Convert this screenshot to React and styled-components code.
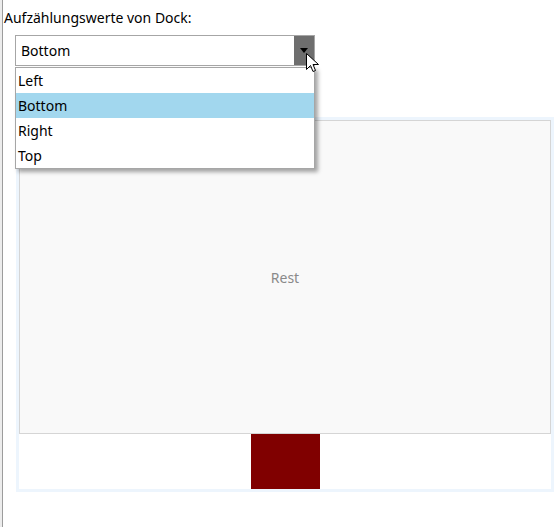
import React from "react";
import styled, { createGlobalStyle } from "styled-components";

const GlobalStyle = createGlobalStyle`
  html, body {
    margin: 0;
    padding: 0;
    background: #ffffff;
  }
  body {
    font-family: "Noto Sans", "Open Sans", sans-serif;
    font-size: 14px;
    color: #000000;
  }
`;

const OPTIONS = ["Left", "Bottom", "Right", "Top"];

const Styles = {
  Window: styled.div`
    display: flex;
    width: 560px;
    height: 527px;
    overflow: hidden;
  `,
  Edge: styled.div`
    flex: 0 0 2px;
    background: #ececec;
    border-right: 1px solid #9c9c9c;
  `,
  Main: styled.div`
    flex: 1;
    display: flex;
    flex-direction: column;
    position: relative;
  `,
  Label: styled.div`
    height: 35px;
    box-sizing: border-box;
    padding: 8px 0 0 1px;
    line-height: 19px;
    white-space: nowrap;
  `,
  Combo: styled.div`
    position: relative;
    margin-left: 12px;
    width: 300px;
    height: 31px;
    box-sizing: border-box;
    border: 1px solid #a6a6a6;
    display: flex;
    align-items: stretch;
    background: #ffffff;
  `,
  ComboText: styled.div`
    flex: 1;
    display: flex;
    align-items: center;
    padding-left: 5px;
  `,
  ComboButton: styled.div`
    flex: 0 0 20px;
    background: #6e6e6e;
    display: flex;
    align-items: center;
    justify-content: center;
  `,
  Popup: styled.ul`
    position: absolute;
    top: 31px;
    left: -1px;
    width: 300px;
    box-sizing: border-box;
    margin: 0;
    padding: 0;
    list-style: none;
    background: #ffffff;
    border: 1px solid #a6a6a6;
    box-shadow: 3px 3px 4px rgba(0, 0, 0, 0.35);
    z-index: 2;
  `,
  Item: styled.li`
    height: 25px;
    line-height: 25px;
    padding-left: 2px;
    background: ${(props) => (props.selected ? "#a2d7ee" : "transparent")};
  `,
  Cursor: styled.svg`
    position: absolute;
    left: 290px;
    top: 17px;
    z-index: 3;
  `,
  Frame: styled.div`
    margin: 51px 0 0 13px;
    width: 538px;
    height: 375px;
    box-sizing: border-box;
    border: 3px solid #edf5fd;
    display: flex;
    flex-direction: column;
  `,
  Rest: styled.div`
    flex: 1;
    background: #f9f9f9;
    border: 1px solid #d5d5d5;
    display: flex;
    align-items: center;
    justify-content: center;
    color: #8a8a8a;
  `,
  Dock: styled.div`
    height: 55px;
    display: flex;
    justify-content: center;
  `,
  Block: styled.div`
    width: 69px;
    background: #800000;
  `,
};

export default function App() {
  return (
    <>
      <GlobalStyle />
      <Styles.Window>
        <Styles.Edge />
        <Styles.Main>
          <Styles.Label>Aufzählungswerte von Dock:</Styles.Label>
          <Styles.Combo>
            <Styles.ComboText>Bottom</Styles.ComboText>
            <Styles.ComboButton>
              <svg width="8" height="5" viewBox="0 0 8 5">
                <path d="M0 0 H8 L4 5 Z" fill="#000" />
              </svg>
            </Styles.ComboButton>
            <Styles.Popup>
              {OPTIONS.map((opt) => (
                <Styles.Item key={opt} selected={opt === "Bottom"}>
                  {opt}
                </Styles.Item>
              ))}
            </Styles.Popup>
            <Styles.Cursor width="13" height="21" viewBox="0 0 13 21">
              <path
                d="M0.5 0.5 V16.5 L4.5 12.5 L7 18.5 L9.5 17.5 L7 11.5 H12.5 Z"
                fill="#fff"
                stroke="#000"
                strokeWidth="1"
              />
            </Styles.Cursor>
          </Styles.Combo>
          <Styles.Frame>
            <Styles.Rest>Rest</Styles.Rest>
            <Styles.Dock>
              <Styles.Block />
            </Styles.Dock>
          </Styles.Frame>
        </Styles.Main>
      </Styles.Window>
    </>
  );
}
